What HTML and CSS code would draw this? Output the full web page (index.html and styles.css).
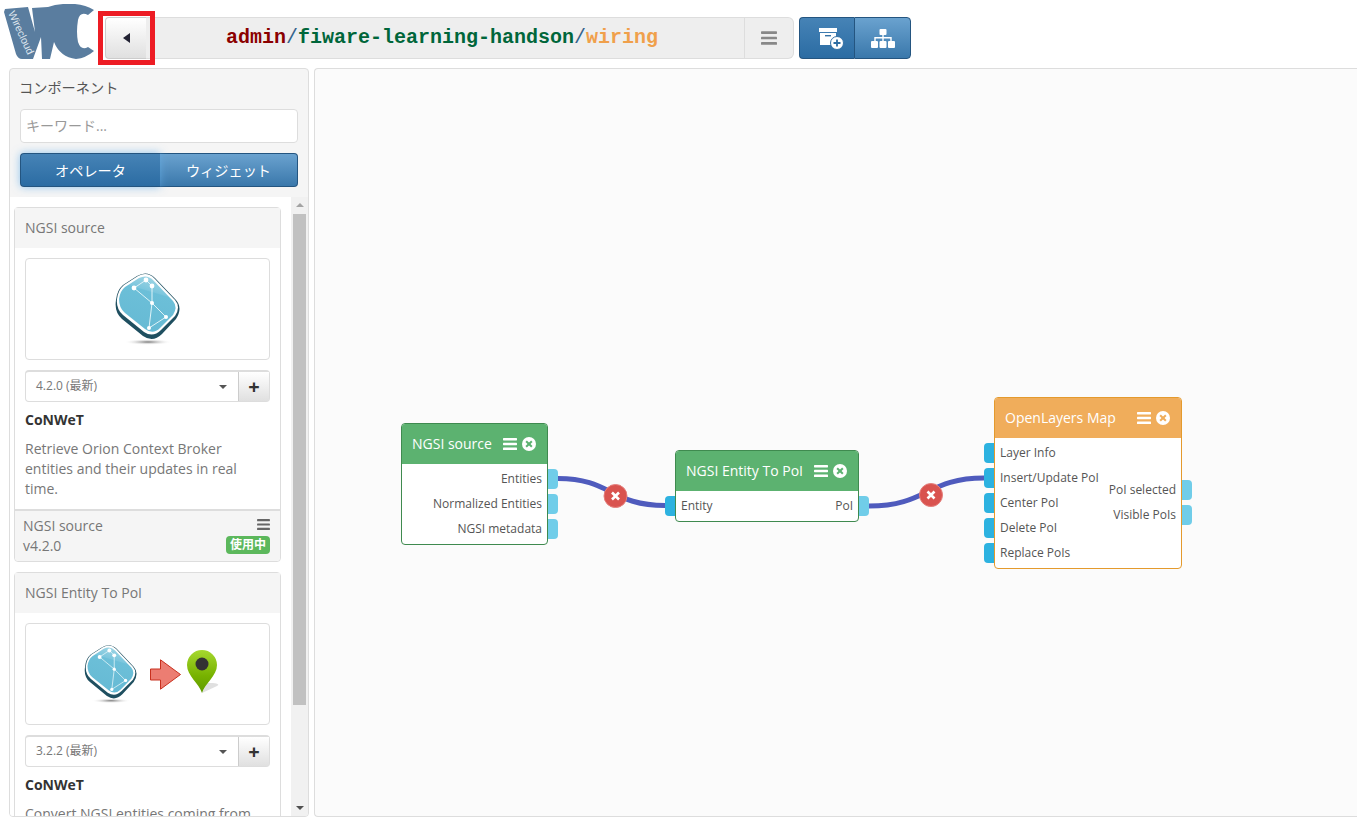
FILE: index.html
```html
<!DOCTYPE html>
<html lang="ja">
<head>
  <meta charset="UTF-8" />
  <title>Wirecloud wiring</title>
  <link rel="stylesheet" href="styles.css">
</head>
<body>
  <svg class="defs" aria-hidden="true">
    <defs>
      <radialGradient id="ngsi-shadow">
        <stop offset="0" stop-color="#777" />
        <stop offset="1" stop-color="#fff" stop-opacity="0" />
      </radialGradient>
      <linearGradient id="ngsi-fill" x1="0.7" y1="0" x2="0.4" y2="1">
        <stop offset="0" stop-color="#a5d8e6" />
        <stop offset="0.28" stop-color="#7cc6dd" />
        <stop offset="0.3" stop-color="#6cbfd8" />
        <stop offset="1" stop-color="#66bad4" />
      </linearGradient>
      <linearGradient id="pin-fill" x1="0" y1="0" x2="0" y2="1">
        <stop offset="0" stop-color="#a6d82f" />
        <stop offset="0.6" stop-color="#77b200" />
        <stop offset="1" stop-color="#5f9a00" />
      </linearGradient>
    </defs>
    <symbol id="bars" viewBox="0 0 14 12">
      <rect y="0" width="14" height="2.4" rx="0.6" />
      <rect y="4.8" width="14" height="2.4" rx="0.6" />
      <rect y="9.6" width="14" height="2.4" rx="0.6" />
    </symbol>
    <symbol id="ngsi" viewBox="0 0 66 74">
      <ellipse cx="33" cy="70" rx="24" ry="3" fill="url(#ngsi-shadow)" />
      <path d="M8 13 L22 4 Q32 -2 40 6 L61 28 Q68 36 61 47 L47 62 Q38 71 28 64 L7 47 Q-1 40 1 28 Q2 18 8 13 Z" fill="#1f4f60" />
      <path d="M9 13 L23 4 Q32 -1 39 6 L60 28 Q66 35 60 44 L46 58 Q38 66 29 60 L8 43 Q1 37 2 27 Q3 18 9 13 Z" fill="#fff" />
      <path d="M10 15 L24 6 Q32 2 38 8 L58 29 Q63 35 58 43 L45 56 Q38 63 30 57 L10 41 Q4 36 4 27 Q5 19 10 15 Z" fill="url(#ngsi-fill)" />
      <path d="M19 16 L31 8 L37 14 L37 31 Z M37 31 L51 45 L34 56 Z" fill="none" stroke="#dff3f8" stroke-width="1" />
      <g fill="#fff">
        <circle cx="19" cy="16" r="2.4" />
        <circle cx="31" cy="8" r="2.4" />
        <circle cx="37" cy="14" r="2.4" />
        <circle cx="37" cy="31" r="2" />
        <circle cx="51" cy="45" r="2" />
        <circle cx="34" cy="56" r="2" />
      </g>
    </symbol>
  </svg>

  <header class="topbar">
    <svg class="logo" viewBox="0 0 91 55" aria-label="Wirecloud">
      <path d="M1 5 L24 3 L31 28 L28 4 L44 3 Q55 -1 71 0 Q82 1 90 6 L84 11 Q76 7 74 16 Q72 28 74 38 Q77 47 84 43 L90 47 Q82 54 72 55 Q56 53 50 38 L46 55 L38 55 L37 33 L29 55 L18 55 Q14 55 12 50 L0 8 Z" fill="#5a7d9f" />
      <text class="logo-text" transform="translate(4 9) rotate(65)">Wirecloud</text>
    </svg>
    <button class="back-btn"><span class="tri-left"></span></button>
    <div class="crumbs">
      <div class="crumb-path"><span class="c-owner">admin</span><span class="c-sep">/</span><span class="c-name">fiware-learning-handson</span><span class="c-sep">/</span><span class="c-view">wiring</span></div>
      <div class="crumb-menu"><svg class="ico-bars-lg"><use href="#bars" /></svg></div>
    </div>
    <div class="tool-group">
      <button class="tool-btn tool-active">
        <svg class="ico-archive" width="25" height="23" viewBox="0 0 25 23">
          <rect x="0" y="1" width="18" height="4" fill="#fff" />
          <path d="M1 6 H17 V18 H1 Z" fill="#fff" />
          <rect x="6" y="8" width="6" height="1.4" fill="#3572a6" />
          <circle cx="18" cy="16" r="6.500" fill="#fff" stroke="#3572a6" stroke-width="1" />
          <path d="M18 12.500 V19.500 M14.500 16 H21.500" stroke="#2d6ca2" stroke-width="1.8" />
        </svg>
      </button>
      <button class="tool-btn">
        <svg width="24" height="19" viewBox="0 0 24 19" fill="#fff">
          <rect x="8.500" y="0" width="7" height="6" rx="1" />
          <path d="M11.300 6 H12.700 V8 H20.700 V12 H19.300 V9.500 H12.700 V12 H11.300 V9.500 H4.700 V12 H3.300 V8 H11.300 Z" />
          <rect x="0" y="12" width="7" height="7" rx="1" />
          <rect x="8.500" y="12" width="7" height="7" rx="1" />
          <rect x="17" y="12" width="7" height="7" rx="1" />
        </svg>
      </button>
    </div>
    <div class="highlight"></div>
  </header>

  <main class="layout">
    <aside class="sidebar">
      <div class="side-top">
        <div class="side-title">コンポーネント</div>
        <input class="search" type="text" placeholder="キーワード..." />
        <div class="tabs">
          <button class="tab tab-active">オペレータ</button>
          <button class="tab">ウィジェット</button>
        </div>
      </div>
      <div class="side-scroll">
        <div class="card-list">
          <section class="card">
            <div class="card-head">NGSI source</div>
            <div class="card-body">
              <div class="thumb"><svg class="ngsi-big"><use href="#ngsi" /></svg></div>
              <div class="version-row">
                <div class="version">4.2.0 (最新)<span class="caret"></span></div>
                <button class="add-btn">+</button>
              </div>
              <div class="vendor">CoNWeT</div>
              <p class="desc">Retrieve Orion Context Broker entities and their updates in real time.</p>
            </div>
            <div class="card-foot">
              <div>
                <div>NGSI source</div>
                <div>v4.2.0</div>
              </div>
              <div class="foot-side">
                <svg class="ico-bars-sm"><use href="#bars" /></svg>
                <span class="badge">使用中</span>
              </div>
            </div>
          </section>
          <section class="card">
            <div class="card-head">NGSI Entity To PoI</div>
            <div class="card-body">
              <div class="thumb thumb-pair">
                <svg class="ngsi-small"><use href="#ngsi" /></svg>
                <svg class="arrow" viewBox="0 0 31 31">
                  <path d="M0.500 10 H10.500 V0.800 L30.500 15.500 L10.500 30.200 V21 H0.500 Z" fill="#ec7d72" stroke="#c8301e" stroke-width="1" />
                </svg>
                <svg class="pin" viewBox="0 0 34 44">
                  <path d="M15 43 L30 36 Q34 34 26 33 L20 33 Z" fill="#ccc" opacity="0.6" />
                  <path d="M15 43 C12 33 0 26 0 15 A15 15 0 0 1 30 15 C30 26 18 33 15 43 Z" fill="url(#pin-fill)" />
                  <circle cx="15" cy="14" r="6.500" fill="#333" />
                </svg>
              </div>
              <div class="version-row">
                <div class="version">3.2.2 (最新)<span class="caret"></span></div>
                <button class="add-btn">+</button>
              </div>
              <div class="vendor">CoNWeT</div>
              <p class="desc">Convert NGSI entities coming from</p>
            </div>
          </section>
        </div>
        <div class="scrollbar">
          <span class="sb-up"></span>
          <div class="sb-thumb"></div>
          <span class="sb-down"></span>
        </div>
      </div>
    </aside>

    <section class="canvas">
      <svg class="edges">
        <path d="M243 409.500 C296 409.500 296 436.500 350 436.500" />
        <path d="M554 437 C612 437 612 409 669 409" />
        <g class="edge-del" transform="translate(300.500 427)">
          <circle r="11.500" />
          <path d="M-3.500 -3.500 L3.500 3.500 M3.500 -3.500 L-3.500 3.500" />
        </g>
        <g class="edge-del" transform="translate(616 426)">
          <circle r="11.500" />
          <path d="M-3.500 -3.500 L3.500 3.500 M3.500 -3.500 L-3.500 3.500" />
        </g>
      </svg>

      <div class="node node-green node-a">
        <div class="node-head">
          <span class="node-title">NGSI source</span>
          <svg class="node-bars"><use href="#bars" /></svg>
          <span class="node-close"></span>
        </div>
        <div class="node-body">
          <div class="ports ports-out">
            <div class="port">Entities</div>
            <div class="port">Normalized Entities</div>
            <div class="port">NGSI metadata</div>
          </div>
        </div>
      </div>

      <div class="node node-green node-b">
        <div class="node-head">
          <span class="node-title">NGSI Entity To PoI</span>
          <svg class="node-bars"><use href="#bars" /></svg>
          <span class="node-close"></span>
        </div>
        <div class="node-body">
          <div class="ports ports-in">
            <div class="port">Entity</div>
          </div>
          <div class="ports ports-out">
            <div class="port">PoI</div>
          </div>
        </div>
      </div>

      <div class="node node-orange node-c">
        <div class="node-head">
          <span class="node-title">OpenLayers Map</span>
          <svg class="node-bars"><use href="#bars" /></svg>
          <span class="node-close"></span>
        </div>
        <div class="node-body">
          <div class="ports ports-in">
            <div class="port">Layer Info</div>
            <div class="port">Insert/Update PoI</div>
            <div class="port">Center PoI</div>
            <div class="port">Delete PoI</div>
            <div class="port">Replace PoIs</div>
          </div>
          <div class="ports ports-out ports-shift">
            <div class="port">PoI selected</div>
            <div class="port">Visible PoIs</div>
          </div>
        </div>
      </div>
    </section>
  </main>
</body>
</html>
```

FILE: styles.css
```css
* {
  box-sizing: border-box;
}
html, body {
  height: 100%;
}
body {
  margin: 0;
  overflow: hidden;
  background: #fff;
  color: #333;
  font-family: "Open Sans", "Noto Sans CJK JP", sans-serif;
  font-size: 14px;
}
button {
  font-family: inherit;
}
.defs {
  position: absolute;
  width: 0;
  height: 0;
}

/* top bar */
.topbar {
  position: relative;
  display: flex;
  align-items: flex-start;
  height: 68px;
  padding: 17px 0 0 105px;
}
.logo {
  position: absolute;
  left: 4px;
  top: 4px;
  width: 91px;
  height: 55px;
}
.logo-text {
  font-family: "Liberation Sans", sans-serif;
  font-size: 10.5px;
  fill: #dfe6ee;
}
.back-btn {
  display: flex;
  align-items: center;
  justify-content: center;
  width: 41px;
  height: 42px;
  padding: 0;
  background: linear-gradient(#fff, #e0e0e0);
  border: 1px solid #ccc;
  border-right: 0;
  border-radius: 4px 0 0 4px;
}
.tri-left {
  width: 0;
  height: 0;
  border-top: 5.5px solid transparent;
  border-bottom: 5.5px solid transparent;
  border-right: 7px solid #223;
}
.crumbs {
  display: flex;
  width: 648px;
  height: 42px;
  background: #eee;
  border: 1px solid #ddd;
  border-left: 0;
  border-radius: 0 6px 6px 0;
}
.crumb-path {
  flex: 1;
  padding-right: 6px;
  text-align: center;
  font-family: "Liberation Mono", monospace;
  font-size: 20px;
  font-weight: bold;
  line-height: 40px;
}
.c-owner { color: #8b0000; }
.c-sep { color: #35648c; font-weight: normal; }
.c-name { color: #00663a; }
.c-view { color: #f0a04b; }
.crumb-menu {
  display: flex;
  align-items: center;
  justify-content: center;
  width: 49px;
  border-left: 1px solid #ddd;
}
.ico-bars-lg {
  width: 16px;
  height: 14px;
  fill: #888;
}
.tool-group {
  display: flex;
  margin-left: 5px;
  height: 42px;
}
.tool-btn {
  display: flex;
  align-items: center;
  justify-content: center;
  width: 57px;
  padding: 0;
  border: 1px solid #245580;
  background: linear-gradient(#6aa2cf, #3a78ab);
  border-radius: 0 4px 4px 0;
}
.tool-active {
  width: 55px;
  background: linear-gradient(#4683b6, #2b6ca3);
  border-right: 0;
  border-radius: 4px 0 0 4px;
}
.ico-archive {
  margin-left: 8px;
}
.highlight {
  position: absolute;
  left: 98px;
  top: 11px;
  width: 57px;
  height: 54px;
  border: 5px solid #ed1c24;
}

/* page body */
.layout {
  display: flex;
  gap: 5px;
  height: 749px;
  padding-left: 9px;
}
.sidebar {
  display: flex;
  flex-direction: column;
  width: 300px;
  background: #f5f5f5;
  border: 1px solid #ddd;
  border-radius: 4px;
  overflow: hidden;
}
.side-top {
  height: 128px;
  padding: 0 10px;
}
.side-title {
  height: 40px;
  line-height: 38px;
  font-size: 14.2px;
  color: #555;
  margin-left: -1px;
}
.search {
  display: block;
  width: 100%;
  height: 34px;
  padding: 0 5px 2px;
  font-family: inherit;
  font-size: 14px;
  border: 1px solid #ddd;
  border-radius: 4px;
}
.search::placeholder {
  color: #999;
}
.tabs {
  display: flex;
  margin-top: 10px;
  height: 34px;
}
.tab {
  flex: 1;
  padding: 0;
  color: #fff;
  font-size: 14.2px;
  border: 1px solid #245580;
  border-left: 0;
  background: linear-gradient(#6aa2cf, #3a78ab);
  border-radius: 0 4px 4px 0;
}
.tab-active {
  flex: 0 0 140px;
  position: relative;
  background: linear-gradient(#4683b6, #2b6ca3);
  border-left: 1px solid #245580;
  border-right: 0;
  border-radius: 4px 0 0 4px;
  box-shadow: 0 0 8px rgba(102, 175, 233, 0.7);
}
.side-scroll {
  flex: 1;
  display: flex;
  min-height: 0;
}
.card-list {
  flex: 1;
  display: flex;
  flex-direction: column;
  gap: 10px;
  padding: 10px 10px 0 4px;
  background: #fff;
  overflow: hidden;
}
.scrollbar {
  flex: 0 0 17px;
  display: flex;
  flex-direction: column;
  align-items: center;
  background: #f1f1f1;
}
.sb-up, .sb-down {
  flex: 0 0 4px;
  width: 0;
  height: 0;
  border-left: 4px solid transparent;
  border-right: 4px solid transparent;
}
.sb-up {
  margin-top: 6px;
  border-bottom: 4px solid #a3a3a3;
}
.sb-down {
  margin-top: auto;
  margin-bottom: 6px;
  border-top: 4px solid #505050;
}
.sb-thumb {
  width: 13px;
  height: 491px;
  margin-top: 7px;
  background: #c1c1c1;
}
.card {
  flex: none;
  background: #fff;
  border: 1px solid #ddd;
  border-radius: 4px;
  color: #777;
}
.card-head {
  height: 40px;
  padding: 0 10px;
  line-height: 39px;
  background: #f5f5f5;
}
.card-body {
  padding: 10px 10px 0;
}
.thumb {
  display: flex;
  align-items: center;
  justify-content: center;
  height: 102px;
  border: 1px solid #ddd;
  border-radius: 4px;
}
.thumb-pair {
  justify-content: flex-start;
  padding-left: 58px;
}
.ngsi-big {
  width: 66px;
  height: 74px;
}
.ngsi-small {
  width: 54px;
  height: 60px;
}
.arrow {
  width: 31px;
  height: 31px;
  margin-left: 12px;
}
.pin {
  width: 34px;
  height: 44px;
  margin: 0 0 4px 6px;
}
.version-row {
  display: flex;
  height: 32px;
  margin-top: 10px;
  border: 1px solid #ddd;
  border-top-width: 2px;
  border-radius: 4px;
}
.version {
  flex: 1;
  display: flex;
  align-items: center;
  justify-content: space-between;
  padding: 0 11px 3px 10px;
  font-size: 12px;
}
.caret {
  width: 0;
  height: 0;
  margin-top: 3px;
  border-left: 4px solid transparent;
  border-right: 4px solid transparent;
  border-top: 4px solid #555;
}
.add-btn {
  width: 31px;
  padding: 0;
  color: #333;
  font-size: 20px;
  font-weight: bold;
  line-height: 1;
  background: linear-gradient(#fff, #e0e0e0);
  border: 0;
  border-left: 1px solid #ccc;
}
.vendor {
  margin-top: 8px;
  color: #333;
  font-weight: bold;
  line-height: 20px;
}
.desc {
  margin: 9px 0 10px;
  line-height: 20px;
}
.card-foot {
  display: flex;
  justify-content: space-between;
  height: 52px;
  padding: 5px 10px 0 8px;
  line-height: 20px;
  background: #f5f5f5;
  border-top: 2px solid #ddd;
  border-radius: 0 0 4px 4px;
}
.foot-side {
  display: flex;
  flex-direction: column;
  align-items: flex-end;
  gap: 6px;
  padding-top: 3px;
}
.ico-bars-sm {
  width: 13px;
  height: 11px;
  fill: #666;
}
.badge {
  padding: 0 4px;
  color: #fff;
  font-size: 12px;
  font-weight: bold;
  line-height: 18px;
  background: #5cb85c;
  border-radius: 4px;
}

/* wiring canvas */
.canvas {
  position: relative;
  flex: 1;
  background: #fbfbfb;
  border: 1px solid #ddd;
  border-right: 0;
  border-radius: 4px 0 0 4px;
}
.edges {
  position: absolute;
  left: 0;
  top: 0;
  width: 100%;
  height: 100%;
}
.edges > path {
  fill: none;
  stroke: #4f5bbd;
  stroke-width: 5;
}
.edge-del circle {
  fill: #d9534f;
  stroke: #e57f7c;
  stroke-width: 1;
}
.edge-del path {
  fill: none;
  stroke: #fff;
  stroke-width: 2.6;
}
.node {
  position: absolute;
  background: #fff;
  border: 1px solid;
  border-radius: 4px;
}
.node-green { border-color: #3f8a4f; }
.node-orange { border-color: #e49a2d; }
.node-a { left: 86px; top: 354px; width: 147px; }
.node-b { left: 360px; top: 381px; width: 184px; }
.node-c { left: 679px; top: 328px; width: 188px; }
.node-head {
  display: flex;
  align-items: center;
  height: 40px;
  padding: 0 11px 0 10px;
  color: #fff;
  border-radius: 3px 3px 0 0;
}
.node-green .node-head { background: #5cb270; }
.node-orange .node-head { background: #f0ad5b; }
.node-title {
  flex: 1;
  margin-bottom: 2px;
  white-space: nowrap;
}
.node-bars {
  flex: none;
  width: 14px;
  height: 12px;
  margin-left: 10px;
  fill: #fff;
}
.node-close {
  flex: none;
  position: relative;
  width: 14px;
  height: 14px;
  margin-left: 5px;
  background: #fff;
  border-radius: 50%;
}
.node-close::before, .node-close::after {
  content: "";
  position: absolute;
  left: 3px;
  top: 6px;
  width: 8px;
  height: 2px;
  background: #5cb270;
  transform: rotate(45deg);
}
.node-close::after {
  transform: rotate(-45deg);
}
.node-orange .node-close::before, .node-orange .node-close::after {
  background: #f0ad5b;
}
.node-body {
  display: flex;
  justify-content: space-between;
  align-items: center;
  padding: 5px;
  color: #555;
  font-size: 12px;
}
.ports {
  display: flex;
  flex-direction: column;
  gap: 5px;
}
.ports-out {
  margin-left: auto;
  text-align: right;
}
.ports-shift {
  margin-bottom: 2px;
}
.port {
  position: relative;
  height: 20px;
  line-height: 20px;
  white-space: nowrap;
}
.port::before {
  content: "";
  position: absolute;
  top: 0;
  width: 10px;
  height: 20px;
}
.ports-in .port::before {
  left: -16px;
  background: #2db2e0;
  border-radius: 4px 0 0 4px;
}
.ports-out .port::before {
  right: -16px;
  background: #70cde9;
  border-radius: 0 4px 4px 0;
}
```
